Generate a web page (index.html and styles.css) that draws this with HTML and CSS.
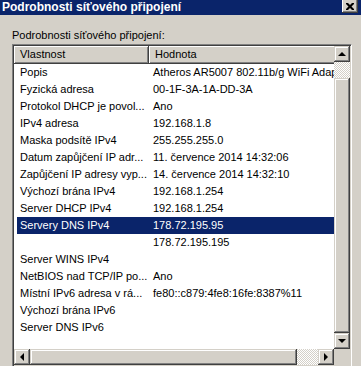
FILE: index.html
```html
<!DOCTYPE html>
<html lang="cs">
<head>
  <meta charset="UTF-8">
  <title>Podrobnosti síťového připojení</title>
  <link rel="stylesheet" href="styles.css">
</head>
<body>
  <!-- titulek okna -->
  <div class="titlebar">
    <span class="title">Podrobnosti síťového připojení</span>
    <span class="close-btn">
      <svg width="8" height="7" viewBox="0 0 8 7">
        <path d="M0 0h2l2 2 2-2h2v1l-2.5 2.5L8 6v1H6L4 5 2 7H0V6l2.5-2.5L0 1z" fill="#000"/>
      </svg>
    </span>
  </div>

  <div class="content">
    <div class="label">Podrobnosti síťového připojení:</div>

    <div class="listbox">
      <div class="list">
        <div class="header">
          <div class="hcol hcol-prop">Vlastnost</div>
          <div class="hcol hcol-val">Hodnota</div>
        </div>
        <div class="rows">
          <div class="row"><div class="cell prop">Popis</div><div class="cell val">Atheros AR5007 802.11b/g WiFi Adapter</div></div>
          <div class="row"><div class="cell prop">Fyzická adresa</div><div class="cell val">00-1F-3A-1A-DD-3A</div></div>
          <div class="row"><div class="cell prop">Protokol DHCP je povol...</div><div class="cell val">Ano</div></div>
          <div class="row"><div class="cell prop">IPv4 adresa</div><div class="cell val">192.168.1.8</div></div>
          <div class="row"><div class="cell prop">Maska podsítě IPv4</div><div class="cell val">255.255.255.0</div></div>
          <div class="row"><div class="cell prop">Datum zapůjčení IP adr...</div><div class="cell val">11. července 2014 14:32:06</div></div>
          <div class="row"><div class="cell prop">Zapůjčení IP adresy vyp...</div><div class="cell val">14. července 2014 14:32:10</div></div>
          <div class="row"><div class="cell prop">Výchozí brána IPv4</div><div class="cell val">192.168.1.254</div></div>
          <div class="row"><div class="cell prop">Server DHCP IPv4</div><div class="cell val">192.168.1.254</div></div>
          <div class="row selected"><div class="cell prop">Servery DNS IPv4</div><div class="cell val">178.72.195.95</div></div>
          <div class="row"><div class="cell prop"></div><div class="cell val">178.72.195.195</div></div>
          <div class="row"><div class="cell prop">Server WINS IPv4</div><div class="cell val"></div></div>
          <div class="row"><div class="cell prop">NetBIOS nad TCP/IP po...</div><div class="cell val">Ano</div></div>
          <div class="row"><div class="cell prop">Místní IPv6 adresa v rá...</div><div class="cell val">fe80::c879:4fe8:16fe:8387%11</div></div>
          <div class="row"><div class="cell prop">Výchozí brána IPv6</div><div class="cell val"></div></div>
          <div class="row"><div class="cell prop">Server DNS IPv6</div><div class="cell val"></div></div>
        </div>
      </div>

      <!-- svislý posuvník -->
      <div class="vscroll">
        <div class="sbtn"><span class="arrow up"></span></div>
        <div class="track vtrack"></div>
        <div class="thumb vthumb"></div>
        <div class="sbtn"><span class="arrow down"></span></div>
      </div>

      <!-- vodorovný posuvník -->
      <div class="hscroll">
        <div class="sbtn"><span class="arrow left"></span></div>
        <div class="thumb hthumb"></div>
        <div class="track htrack"></div>
        <div class="sbtn"><span class="arrow right"></span></div>
      </div>
      <div class="corner"></div>
    </div>
  </div>
</body>
</html>
```

FILE: styles.css
```css
html, body {
  margin: 0;
  height: 100%;
}
body {
  background: #d4d0c8;
  font-family: 'Liberation Sans', Arial, sans-serif;
  font-size: 11px;
  color: #000;
  overflow: hidden;
}
.titlebar {
  height: 15px;
  background: #0a246a;
  display: flex;
  align-items: flex-start;
  justify-content: space-between;
  padding-left: 2px;
}
.title {
  color: #fff;
  font-weight: bold;
  font-size: 12px;
  line-height: 14px;
  white-space: nowrap;
}
.close-btn {
  width: 16px;
  height: 14px;
  margin-top: -1px;
  margin-right: 3px;
  box-sizing: border-box;
  background: #d4d0c8;
  display: flex;
  align-items: center;
  justify-content: center;
  box-shadow: inset -1px -1px #404040, inset 1px 1px #fff, inset -2px -2px #808080, inset 2px 2px #d4d0c8;
}
.content {
  padding: 14px 0 0 12px;
}
.label {
  line-height: 13px;
  height: 15px;
  white-space: nowrap;
}
/* zapuštěný okraj: vnější šedá/bílá, vnitřní tmavá/světle šedá */
.listbox {
  width: 340px;
  height: 323px;
  box-sizing: border-box;
  border: 1px solid;
  border-color: #808080 #fff #fff #808080;
  box-shadow: inset 1px 1px #404040, inset -1px -1px #d4d0c8;
  padding: 1px;
  display: grid;
  grid-template-columns: 320px 16px;
  grid-template-rows: 303px 16px;
  background: #fff;
}
.list {
  background: #fff;
  overflow: hidden;
}
.header {
  display: flex;
  height: 18px;
}
.hcol {
  height: 18px;
  box-sizing: border-box;
  background: #d4d0c8;
  line-height: 17px;
  padding-left: 6px;
  white-space: nowrap;
  overflow: hidden;
  box-shadow: inset -1px -1px #404040, inset 1px 1px #fff, inset -2px -2px #808080;
}
.hcol-prop {
  width: 135px;
  flex: none;
}
.hcol-val {
  flex: 1;
  box-shadow: inset 0 -1px #404040, inset 1px 1px #fff, inset 0 -2px #808080;
}
.rows {
  display: flex;
  flex-direction: column;
}
.row {
  display: flex;
  height: 17px;
  line-height: 17px;
  margin-left: 3px;
  white-space: nowrap;
  overflow: hidden;
}
.row.selected {
  background: #0a246a;
  color: #fff;
}
.cell {
  overflow: hidden;
}
.prop {
  width: 132px;
  flex: none;
  padding-left: 3px;
  box-sizing: border-box;
}
.val {
  padding-left: 4px;
  flex: 1;
}
.vscroll {
  display: flex;
  flex-direction: column;
}
.hscroll {
  display: flex;
}
.sbtn {
  width: 16px;
  height: 16px;
  flex: none;
  box-sizing: border-box;
  background: #d4d0c8;
  display: flex;
  align-items: center;
  justify-content: center;
  box-shadow: inset -1px -1px #404040, inset 1px 1px #d4d0c8, inset -2px -2px #808080, inset 2px 2px #fff;
}
.thumb {
  background: #d4d0c8;
  box-shadow: inset -1px -1px #404040, inset 1px 1px #d4d0c8, inset -2px -2px #808080, inset 2px 2px #fff;
}
.vthumb {
  height: 255px;
  flex: none;
}
.hthumb {
  width: 267px;
  flex: none;
}
.track {
  flex: 1;
  background: repeating-conic-gradient(#fff 0 25%, #d4d0c8 0 50%) 0 0 / 2px 2px;
}
.corner {
  background: #d4d0c8;
}
.arrow {
  width: 0;
  height: 0;
  border: 4px solid transparent;
}
.arrow.up {
  border-top: none;
  border-bottom-color: #000;
  margin-top: -1px;
}
.arrow.down {
  border-bottom: none;
  border-top-color: #000;
}
.arrow.left {
  border-left: none;
  border-right-color: #000;
  margin-left: -1px;
}
.arrow.right {
  border-right: none;
  border-left-color: #000;
}
```
